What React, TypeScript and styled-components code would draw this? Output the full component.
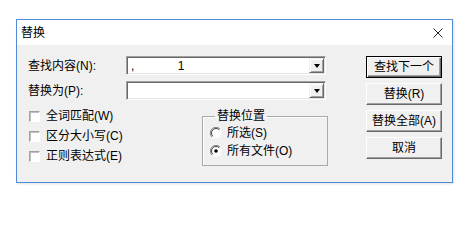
import React from "react";
import styled, { createGlobalStyle } from "styled-components";

const Global = createGlobalStyle`
  html, body { margin: 0; padding: 0; background: #ffffff; }
  body { font-family: "Liberation Sans", "Noto Sans CJK SC", sans-serif; font-size: 12px; color: #000; }
  * { box-sizing: border-box; }
`;

const Page = styled.div`
  width: 464px;
  height: 200px;
  padding: 19px 0 0 16px;
`;

const Window = styled.div`
  width: 437px;
  height: 164px;
  border: 1px solid #4f8bd6;
  display: flex;
  flex-direction: column;
  background: #f0f0f0;
  box-shadow: 1px 1px 2px rgba(0,0,0,0.12);
`;

const TitleBar = styled.div`
  height: 25px;
  background: #ffffff;
  display: flex;
  align-items: center;
  justify-content: space-between;
  padding: 0 9px 0 4px;
`;

const Title = styled.span`
  font-size: 12px;
  line-height: 14px;
  margin-top: 0px;
`;

const Body = styled.div`
  flex: 1;
  display: flex;
  justify-content: space-between;
  padding: 11px 10px 0 11px;
`;

const LeftPane = styled.div`
  width: 300px;
  display: flex;
  flex-direction: column;
`;

const FieldRow = styled.div<{ $mt?: number }>`
  height: 19px;
  display: flex;
  align-items: center;
  margin-top: ${(p) => p.$mt ?? 0}px;
`;

const Label = styled.span`
  width: 98px;
  line-height: 14px;
`;

const Combo = styled.div`
  width: 200px;
  height: 19px;
  background: #ffffff;
  border: 1px solid;
  border-color: #a0a0a0 #ffffff #ffffff #a0a0a0;
  box-shadow: inset 1px 1px #696969, inset -1px -1px #e3e3e3;
  display: flex;
  align-items: center;
  padding: 1px 1px 1px 4px;
`;

const ComboText = styled.span`
  flex: 1;
  white-space: pre;
  line-height: 14px;
`;

const DropButton = styled.div`
  width: 15px;
  height: 15px;
  background: #f0f0f0;
  border: 1px solid;
  border-color: #f0f0f0 #696969 #696969 #f0f0f0;
  box-shadow: inset 1px 1px #ffffff, inset -1px -1px #a0a0a0;
  display: flex;
  align-items: center;
  justify-content: center;
`;

const Arrow = styled.span`
  width: 0;
  height: 0;
  border-left: 3.5px solid transparent;
  border-right: 3.5px solid transparent;
  border-top: 4px solid #000;
  margin-top: 1px;
`;

const Lower = styled.div`
  display: flex;
  justify-content: space-between;
  align-items: flex-start;
  margin-top: 6px;
`;

const CheckList = styled.div`
  display: flex;
  flex-direction: column;
  padding-left: 1px;
`;

const CheckRow = styled.label`
  height: 20px;
  display: flex;
  align-items: center;
  gap: 6px;
  line-height: 14px;
`;

const CheckBox = styled.span`
  width: 11px;
  height: 11px;
  background: #ffffff;
  border: 1px solid;
  border-color: #a0a0a0 #ffffff #ffffff #a0a0a0;
  box-shadow: inset 1px 1px #c0c0c0;
`;

const Group = styled.fieldset`
  width: 126px;
  height: 57px;
  margin: 3px 0 0 0;
  padding: 1px 4px 4px 7px;
  border: 1px solid #a9a9a9;
  box-shadow: inset 1px 1px #ffffff;
`;

const Legend = styled.legend`
  padding: 0 2px;
  margin-left: 5px;
  line-height: 14px;
  font-size: 12px;
`;

const RadioRow = styled.label`
  height: 18px;
  display: flex;
  align-items: center;
  gap: 5px;
  line-height: 14px;
`;

const ButtonColumn = styled.div`
  width: 76px;
  display: flex;
  flex-direction: column;
  gap: 5px;
`;

const Button = styled.button<{ $default?: boolean }>`
  width: 76px;
  height: 22px;
  padding: 0;
  font-family: "Liberation Sans", "Noto Sans CJK SC", sans-serif;
  font-size: 12px;
  line-height: 14px;
  color: #000;
  background: #f0f0f0;
  border: 1px solid;
  border-color: ${(p) => (p.$default ? "#000 #000 #000 #000" : "#ffffff #696969 #696969 #ffffff")};
  box-shadow: ${(p) =>
    p.$default
      ? "inset 1px 1px #ffffff, inset -1px -1px #696969, inset -2px -2px #a0a0a0"
      : "inset -1px -1px #a0a0a0, inset 1px 1px #f0f0f0"};
`;

function Radio({ checked }: { checked?: boolean }) {
  return (
    <svg width="12" height="12" viewBox="0 0 12 12">
      <circle cx="6" cy="6" r="5.5" fill="#ffffff" />
      <path d="M10 2 A5.5 5.5 0 0 0 2 10" fill="none" stroke="#808080" strokeWidth="1" />
      <path d="M9.2 2.8 A4.5 4.5 0 0 0 2.8 9.2" fill="none" stroke="#404040" strokeWidth="1" />
      {checked && <circle cx="6" cy="6" r="1.8" fill="#000" />}
    </svg>
  );
}

function CloseIcon() {
  return (
    <svg width="10" height="10" viewBox="0 0 10 10">
      <path d="M0.5 0.5 L9.5 9.5 M9.5 0.5 L0.5 9.5" stroke="#222" strokeWidth="1" />
    </svg>
  );
}

export default function App() {
  return (
    <>
      <Global />
      <Page>
        <Window>
          <TitleBar>
            <Title>替换</Title>
            <CloseIcon />
          </TitleBar>
          <Body>
            <LeftPane>
              <FieldRow>
                <Label>查找内容(N):</Label>
                <Combo>
                  <ComboText>{",             1"}</ComboText>
                  <DropButton>
                    <Arrow />
                  </DropButton>
                </Combo>
              </FieldRow>
              <FieldRow $mt={6}>
                <Label>替换为(P):</Label>
                <Combo>
                  <ComboText></ComboText>
                  <DropButton>
                    <Arrow />
                  </DropButton>
                </Combo>
              </FieldRow>
              <Lower>
                <CheckList>
                  <CheckRow>
                    <CheckBox />
                    全词匹配(W)
                  </CheckRow>
                  <CheckRow>
                    <CheckBox />
                    区分大小写(C)
                  </CheckRow>
                  <CheckRow>
                    <CheckBox />
                    正则表达式(E)
                  </CheckRow>
                </CheckList>
                <Group>
                  <Legend>替换位置</Legend>
                  <RadioRow>
                    <Radio />
                    所选(S)
                  </RadioRow>
                  <RadioRow>
                    <Radio checked />
                    所有文件(O)
                  </RadioRow>
                </Group>
              </Lower>
            </LeftPane>
            <ButtonColumn>
              <Button $default>查找下一个</Button>
              <Button>替换(R)</Button>
              <Button>替换全部(A)</Button>
              <Button>取消</Button>
            </ButtonColumn>
          </Body>
        </Window>
      </Page>
    </>
  );
}
